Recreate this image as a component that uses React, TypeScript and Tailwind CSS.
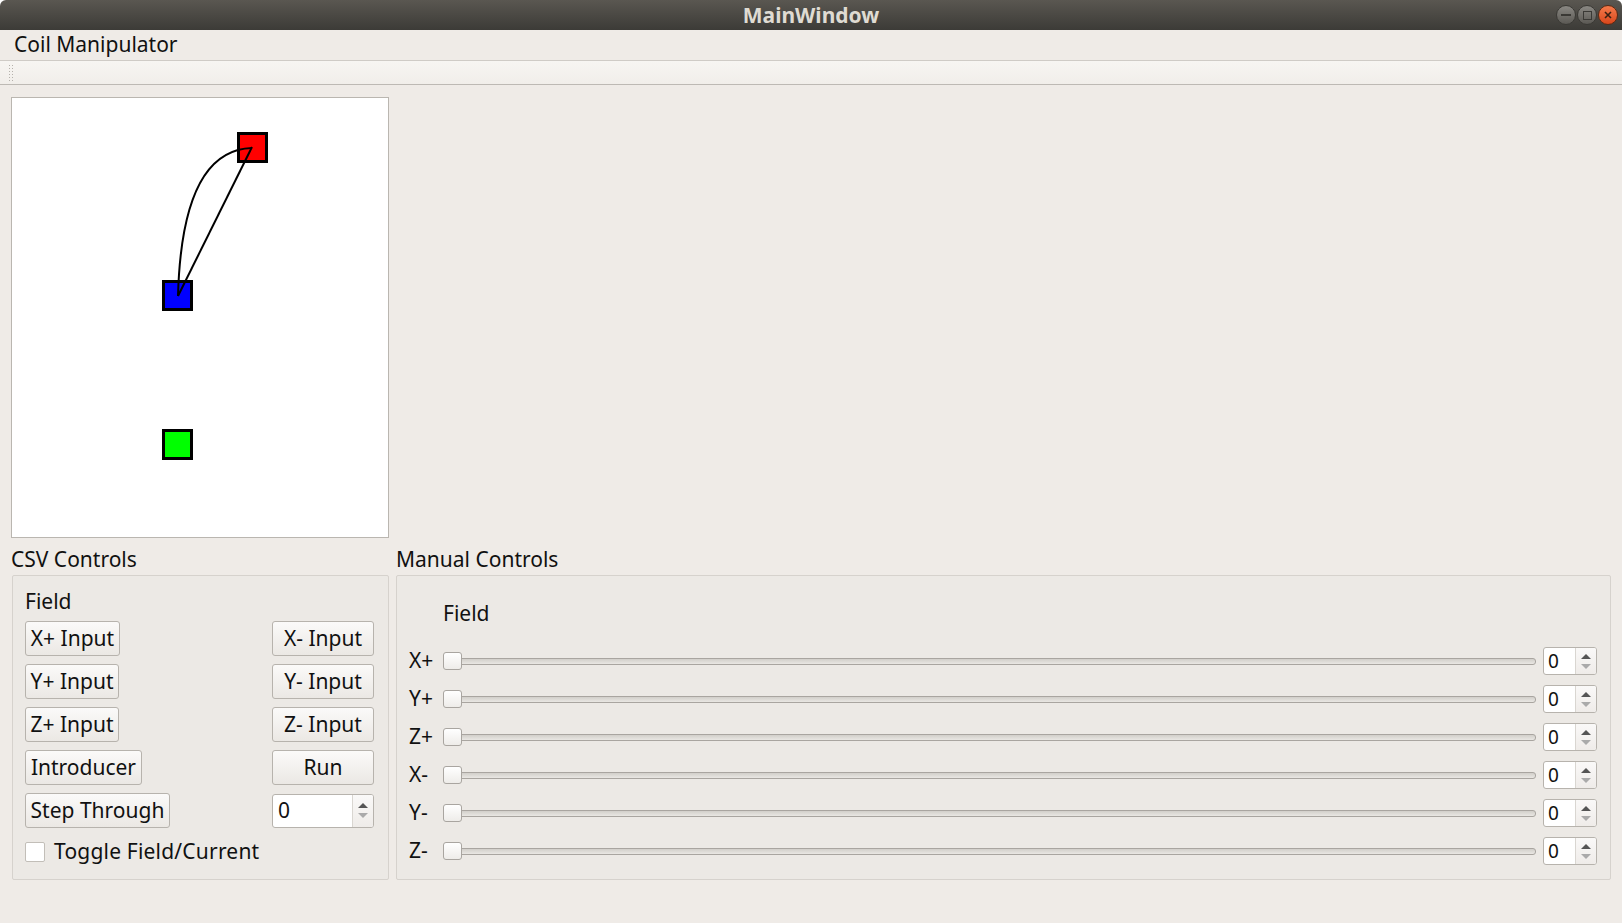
import React from 'react';

const font = { fontFamily: '"Noto Sans", "Open Sans", sans-serif' };

const btn =
  'h-[35px] flex items-center justify-center rounded-[3px] border border-[#b7b3ad] bg-gradient-to-b from-[#fbfaf9] to-[#ebe8e4] text-[21px] text-[#111] leading-none';

const SpinArrows: React.FC = () => (
  <div className="flex flex-col items-center justify-center gap-[5px] w-full h-full border-l border-[#d9d6d1] bg-gradient-to-b from-[#faf9f8] to-[#efece9]">
    <span className="w-0 h-0 border-l-[5px] border-r-[5px] border-b-[5px] border-l-transparent border-r-transparent border-b-[#555]" />
    <span className="w-0 h-0 border-l-[5px] border-r-[5px] border-t-[5px] border-l-transparent border-r-transparent border-t-[#aaa]" />
  </div>
);

const sliders = ['X+', 'Y+', 'Z+', 'X-', 'Y-', 'Z-'];

const App: React.FC = () => {
  return (
    <div className="w-[1622px] h-[923px] flex flex-col bg-white overflow-hidden" style={font}>
      {/* Title bar */}
      <div className="relative h-[30px] flex items-center justify-center rounded-tl-[6px] rounded-tr-[6px] bg-gradient-to-b from-[#5a5751] to-[#3c3b37]">
        <span className="text-[21px] font-bold text-[#dfdbd2] leading-none">MainWindow</span>
        <div className="absolute right-[4px] top-[5px] flex gap-[1px]">
          <div className="w-[20px] h-[20px] rounded-full border border-[#3a3935] bg-gradient-to-b from-[#8a8883] to-[#5b5954] flex items-center justify-center">
            <span className="w-[10px] h-[2px] bg-[#3a3935]" />
          </div>
          <div className="w-[20px] h-[20px] rounded-full border border-[#3a3935] bg-gradient-to-b from-[#8a8883] to-[#5b5954] flex items-center justify-center">
            <span className="w-[9px] h-[9px] border-[1.5px] border-[#3a3935]" />
          </div>
          <div className="w-[20px] h-[20px] rounded-full border border-[#5c2a14] bg-gradient-to-b from-[#f47a4a] to-[#d9461a] flex items-center justify-center">
            <svg width="10" height="10" viewBox="0 0 10 10">
              <path d="M2 2 L8 8 M8 2 L2 8" stroke="#3a2012" strokeWidth="1.6" />
            </svg>
          </div>
        </div>
      </div>

      {/* Menu bar */}
      <div className="h-[31px] flex items-center px-[14px] bg-[#efebe7] border-b border-[#cfcbc6]">
        <span className="text-[21px] text-[#111]">Coil Manipulator</span>
      </div>

      {/* Toolbar */}
      <div className="h-[24px] flex items-center pl-[9px] bg-gradient-to-b from-[#f7f5f2] to-[#f1eeea] border-b border-[#bdb9b4]">
        <div className="grid grid-cols-2 gap-[2px]">
          {Array.from({ length: 12 }).map((_, i) => (
            <span key={i} className="w-[1px] h-[1px] bg-[#b5b1ab]" />
          ))}
        </div>
      </div>

      {/* Central widget */}
      <div className="flex-1 bg-[#efebe7] px-[11px] pt-[12px]">
        <div className="w-[378px] h-[441px] bg-white border border-[#bab6b0]">
          <svg width="376" height="439" viewBox="0 0 376 439">
            <rect x="226.5" y="35.5" width="28" height="28" fill="#ff0000" stroke="#000" strokeWidth="3" />
            <rect x="151.5" y="183.5" width="28" height="28" fill="#0000ff" stroke="#000" strokeWidth="3" />
            <rect x="151.5" y="332.5" width="28" height="28" fill="#00ff00" stroke="#000" strokeWidth="3" />
            <path d="M166 198 Q170 52 240 50" fill="none" stroke="#000" strokeWidth="2" />
            <path d="M166 198 L240 49" fill="none" stroke="#000" strokeWidth="2" />
          </svg>
        </div>

        <div className="flex gap-[7px]">
          {/* CSV Controls */}
          <div className="w-[378px] flex flex-col">
            <div className="h-[37px] pt-[6px] flex items-center text-[21px] text-[#111]">CSV Controls</div>
            <div className="ml-[1px] h-[305px] border border-[#d6d2cd] rounded-[2px] bg-[#ece9e5] pl-[12px] pr-[14px] pt-[12px]">
              <div className="h-[28px] flex items-center text-[21px] text-[#111]">Field</div>
              <div className="mt-[5px] flex flex-col gap-[8px]">
                <div className="flex justify-between">
                  <button className={`${btn} w-[95px]`}>X+ Input</button>
                  <button className={`${btn} w-[102px]`}>X- Input</button>
                </div>
                <div className="flex justify-between">
                  <button className={`${btn} w-[94px]`}>Y+ Input</button>
                  <button className={`${btn} w-[102px]`}>Y- Input</button>
                </div>
                <div className="flex justify-between">
                  <button className={`${btn} w-[94px]`}>Z+ Input</button>
                  <button className={`${btn} w-[102px]`}>Z- Input</button>
                </div>
                <div className="flex justify-between">
                  <button className={`${btn} w-[117px]`}>Introducer</button>
                  <button className={`${btn} w-[102px]`}>Run</button>
                </div>
                <div className="flex justify-between items-center">
                  <button className={`${btn} w-[145px]`}>Step Through</button>
                  <div className="w-[102px] h-[34px] flex rounded-[3px] border border-[#b7b3ad] bg-white overflow-hidden">
                    <span className="flex-1 flex items-center pl-[5px] text-[21px] text-[#111]">0</span>
                    <div className="w-[21px]">
                      <SpinArrows />
                    </div>
                  </div>
                </div>
              </div>
              <div className="mt-[8px] flex items-center gap-[9px]">
                <span className="w-[20px] h-[20px] rounded-[2px] border border-[#c2beb8] bg-white" />
                <span className="text-[21px] text-[#111] tracking-[0.2px]">Toggle Field/Current</span>
              </div>
            </div>
          </div>

          {/* Manual Controls */}
          <div className="w-[1215px] flex flex-col">
            <div className="h-[37px] pt-[6px] flex items-center text-[21px] text-[#111]">Manual Controls</div>
            <div className="h-[305px] border border-[#d6d2cd] rounded-[2px] bg-[#ece9e5] pl-[12px] pr-[13px]">
              <div className="mt-[26px] h-[24px] pl-[34px] flex items-center text-[21px] text-[#111]">Field</div>
              <div className="mt-[16px] flex flex-col">
                {sliders.map((s) => (
                  <div key={s} className="h-[38px] flex items-center">
                    <span className="w-[34px] text-[21px] text-[#111]">{s}</span>
                    <div className="relative flex-1 h-[18px] flex items-center">
                      <div className="w-full h-[7px] rounded-[3px] border border-[#a9a5a0] bg-gradient-to-b from-[#d2cfca] to-[#e9e7e3]" />
                      <div className="absolute left-0 top-0 w-[19px] h-[18px] rounded-[3px] border border-[#a9a5a0] bg-gradient-to-b from-[#ffffff] to-[#eeece9]" />
                    </div>
                    <div className="ml-[7px] w-[54px] h-[28px] flex rounded-[3px] border border-[#b7b3ad] bg-white overflow-hidden">
                      <span className="flex-1 flex items-center pl-[4px] text-[19px] text-[#111]">0</span>
                      <div className="w-[21px]">
                        <SpinArrows />
                      </div>
                    </div>
                  </div>
                ))}
              </div>
            </div>
          </div>
        </div>
      </div>
    </div>
  );
};

export default App;
